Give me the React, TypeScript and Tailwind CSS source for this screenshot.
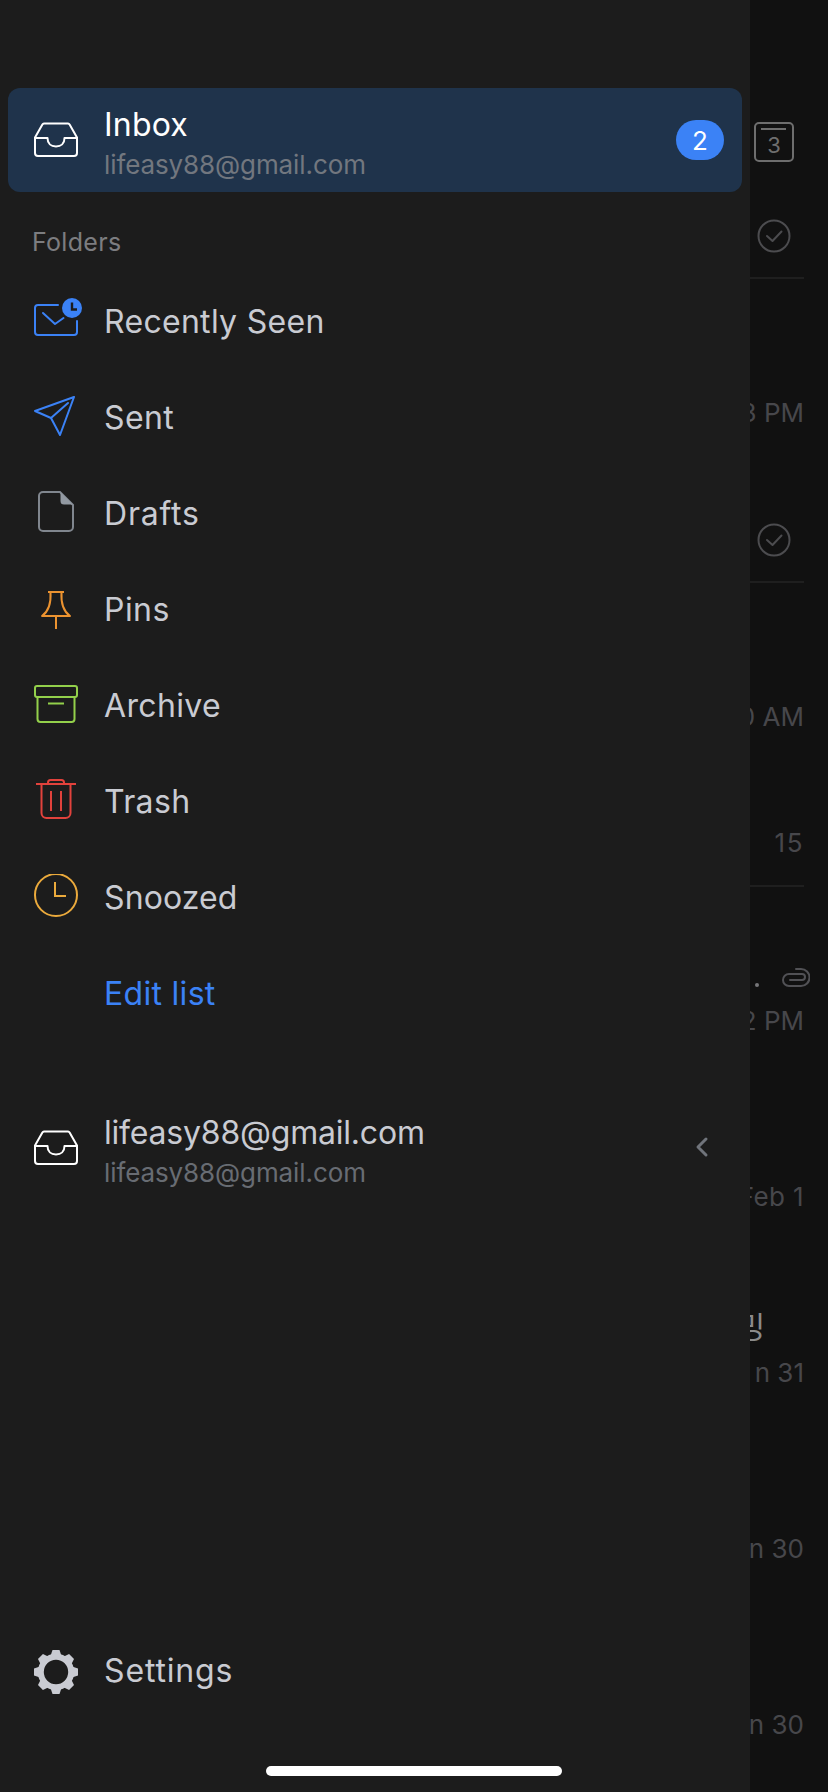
const font = { fontFamily: 'Inter, "Noto Sans CJK KR", sans-serif' };

function InboxIcon() {
  return (
    <svg width="44" height="44" viewBox="0 0 44 44" fill="none" stroke="#fff" strokeWidth="2" strokeLinejoin="round" strokeLinecap="round">
      <path d="M10 5.5H34A2 2 0 0 1 35.6 6.5L43 19.5V35A3 3 0 0 1 40 38H4A3 3 0 0 1 1 35V19.5L8.4 6.5A2 2 0 0 1 10 5.5Z" />
      <path d="M1 20H13.5C13.5 25.5 17 28.5 22 28.5S30.5 25.5 30.5 20H43" />
    </svg>
  );
}

function RecentIcon() {
  return (
    <svg width="44" height="44" viewBox="0 0 44 44" fill="none" stroke="#3b82f6" strokeWidth="2" strokeLinecap="round" strokeLinejoin="round" className="overflow-visible">
      <path d="M24 7H4A3 3 0 0 0 1 10V34A3 3 0 0 0 4 37H40A3 3 0 0 0 43 34V23" />
      <path d="M9 15L21 26L29.5 20" />
      <circle cx="38" cy="10" r="10" fill="#3b82f6" stroke="none" />
      <path d="M38 4.5V11.5H43" stroke="#1c1c1c" strokeWidth="2.4" strokeLinecap="butt" strokeLinejoin="miter" />
    </svg>
  );
}

function SentIcon() {
  return (
    <svg width="44" height="44" viewBox="0 0 44 44" fill="none" stroke="#3b82f6" strokeWidth="2" strokeLinejoin="round" strokeLinecap="round">
      <path d="M40 3L1 17L17 24L26 41Z" />
      <path d="M17 24L34 9" />
    </svg>
  );
}

function DraftIcon() {
  return (
    <svg width="44" height="44" viewBox="0 0 44 44" fill="none">
      <path d="M9 2H26L39 15V37A4 4 0 0 1 35 41H9A4 4 0 0 1 5 37V6A4 4 0 0 1 9 2Z" stroke="#80868e" strokeWidth="2" />
      <path d="M26.5 2L39 14.5H30A3.5 3.5 0 0 1 26.5 11Z" fill="#9299a2" />
    </svg>
  );
}

function PinIcon() {
  return (
    <svg width="44" height="44" viewBox="0 0 44 44" fill="none" stroke="#ec9330" strokeWidth="2" strokeLinejoin="round">
      <path d="M14 6H30" />
      <path d="M16.5 6C17 14 16.5 24 8 30H36C27.5 24 27 14 27.5 6" />
      <path d="M22 30V43" />
    </svg>
  );
}

function ArchiveIcon() {
  return (
    <svg width="44" height="44" viewBox="0 0 44 44" fill="none" stroke="#93d04b" strokeWidth="2" strokeLinejoin="round">
      <rect x="1" y="4" width="42" height="11" rx="2" />
      <path d="M3.5 15V37A3 3 0 0 0 6.5 40H37.5A3 3 0 0 0 40.5 37V15" />
      <path d="M14 21.5H30" />
    </svg>
  );
}

function TrashIcon() {
  return (
    <svg width="44" height="44" viewBox="0 0 44 44" fill="none" stroke="#e2423c" strokeWidth="2">
      <path d="M2 6H42" />
      <path d="M14 6V4.5A2.5 2.5 0 0 1 16.5 2H27.5A2.5 2.5 0 0 1 30 4.5V6" />
      <path d="M7.5 6V35A5 5 0 0 0 12.5 40H31.5A5 5 0 0 0 36.5 35V6" />
      <path d="M17 13V33M27 13V33" />
    </svg>
  );
}

function ClockIcon() {
  return (
    <svg width="44" height="44" viewBox="0 0 44 44" fill="none" stroke="#ebaa3c" strokeWidth="2">
      <circle cx="22" cy="21" r="21" />
      <path d="M21 8V22H32" />
    </svg>
  );
}

function GearIcon() {
  const angles = [0, 45, 90, 135, 180, 225, 270, 315];
  return (
    <svg width="44" height="44" viewBox="0 0 44 44" fill="none">
      <circle cx="22" cy="22" r="15.2" stroke="#c9cbd2" strokeWidth="6" />
      {angles.map((a) => (
        <path key={a} d="M18.5 0H25.5L27.5 6H16.5Z" fill="#c9cbd2" transform={`rotate(${a} 22 22)`} />
      ))}
    </svg>
  );
}

function CheckCircle() {
  return (
    <svg width="34" height="34" viewBox="0 0 34 34" fill="none" stroke="#4c4c4f" strokeWidth="2">
      <circle cx="17" cy="17" r="15.5" />
      <path d="M10 17L15.5 22L24.5 12.5" strokeLinecap="round" strokeLinejoin="round" />
    </svg>
  );
}

function Clip() {
  return (
    <svg width="29" height="22" viewBox="0 0 29 22" fill="none" stroke="#515155" strokeWidth="2" strokeLinecap="round" strokeLinejoin="round">
      <path d="M9 13H21A3 3 0 0 0 21 7H8A6 6 0 0 0 8 19H20A8.5 8.5 0 0 0 20 2H15" />
    </svg>
  );
}

function Row({ icon, label, textClass }: { icon: React.ReactNode; label: string; textClass: string }) {
  return (
    <div className="flex h-[96px] items-center pl-[34px]">
      <div className="h-[44px] w-[44px] shrink-0">{icon}</div>
      <span className={`ml-[26px] text-[32px] font-[420] leading-[40px] text-[#c9cbd2] ${textClass}`}>{label}</span>
    </div>
  );
}

function Time({ children }: { children: React.ReactNode }) {
  return <div className="text-[26px] leading-[32px] text-[#47474b]">{children}</div>;
}

export default function App() {
  return (
    <div className="relative h-[1792px] w-[828px] overflow-hidden bg-[#111111]" style={font}>
      {/* message list behind the drawer */}
      <div className="flex flex-col items-stretch">
        <div className="mr-6 flex h-[279px] flex-col items-end border-b-2 border-[#1f1f1f] pt-[122px]">
          <div className="relative mr-[10px] h-[40px] w-[40px] rounded-[5px] border-[2.5px] border-[#6e6e6e]">
            <div className="absolute left-[5px] top-[4px] h-[2px] w-[25px] bg-[#6e6e6e]" />
            <div className="mt-[8px] text-center text-[22px] leading-[26px] text-[#6e6e6e]">3</div>
          </div>
          <div className="mr-[13px] mt-[57px]"><CheckCircle /></div>
        </div>
        <div className="mr-6 flex h-[304px] flex-col items-end border-b-2 border-[#1f1f1f] pt-[118px]">
          <Time>3 PM</Time>
          <div className="mr-[13px] mt-[94px]"><CheckCircle /></div>
        </div>
        <div className="mr-6 flex h-[304px] flex-col items-end border-b-2 border-[#1f1f1f] pt-[118px]">
          <Time>0 AM</Time>
          <div className="mt-[94px] tracking-[1.5px]"><Time>15</Time></div>
        </div>
        <div className="mr-6 flex h-[176px] flex-col items-end pt-[80px]">
          <div className="mr-[-6px] flex items-end gap-[22px]">
            <div className="mb-[2px] h-[4px] w-[4px] rounded-full bg-[#77777a]" />
            <Clip />
          </div>
          <div className="mt-[16px]"><Time>2 PM</Time></div>
        </div>
        <div className="mr-6 flex h-[176px] flex-col items-end pt-[118px] tracking-[0.4px]">
          <Time>Feb 1</Time>
        </div>
        <div className="mr-6 flex h-[176px] flex-col items-end pt-[70px]">
          <div className="mr-[39px] h-[36px] text-[30px] leading-[36px] text-[#8a8a8a]">밍</div>
          <div className="mt-[12px]"><Time>n 31</Time></div>
        </div>
        <div className="mr-6 flex h-[176px] flex-col items-end pt-[118px]">
          <Time>n 30</Time>
        </div>
        <div className="mr-6 flex h-[176px] flex-col items-end pt-[118px]">
          <Time>n 30</Time>
        </div>
      </div>

      {/* drawer */}
      <div className="absolute inset-y-0 left-0 flex w-[750px] flex-col bg-[#1c1c1c] pt-[88px]">
        <div className="mx-[8px] flex h-[104px] items-center rounded-[12px] bg-[#1f334b] pl-[26px] pr-[18px]">
          <InboxIcon />
          <div className="ml-[26px] flex-1 pt-[9px]">
            <div className="text-[32px] font-[420] leading-[40px] tracking-[0.2px] text-white">Inbox</div>
            <div className="text-[26px] leading-[40px] tracking-[-0.1px] text-[#72777f]">lifeasy88@gmail.com</div>
          </div>
          <div className="flex h-[40px] w-[48px] items-center justify-center rounded-full bg-[#3b82f6] text-[26px] text-white">2</div>
        </div>

        <div className="mt-[32px] pl-[32px] text-[25px] leading-[36px] tracking-[0.3px] text-[#7c7d80]">Folders</div>

        <div className="mt-[12px]">
          <Row icon={<RecentIcon />} label="Recently Seen" textClass="pt-[3px] tracking-[0.3px]" />
          <Row icon={<SentIcon />} label="Sent" textClass="pt-[3px] tracking-[0.4px]" />
          <Row icon={<DraftIcon />} label="Drafts" textClass="pt-[3px] tracking-[0.8px]" />
          <Row icon={<PinIcon />} label="Pins" textClass="pt-[3px] tracking-[0.45px]" />
          <Row icon={<ArchiveIcon />} label="Archive" textClass="pt-[3px] tracking-[0.35px]" />
          <Row icon={<TrashIcon />} label="Trash" textClass="pt-[3px] tracking-[0.35px]" />
          <Row icon={<ClockIcon />} label="Snoozed" textClass="pt-[3px] tracking-[0.1px]" />
          <div className="flex h-[96px] items-center pl-[104px] pt-[3px] text-[32px] tracking-[0.3px] text-[#3b82f6]">Edit list</div>
        </div>

        <div className="mt-[58px] flex h-[100px] items-center pl-[34px] pr-[41px]">
          <InboxIcon />
          <div className="ml-[26px] flex-1 pt-[10px]">
            <div className="text-[32px] font-[420] leading-[40px] tracking-[-0.2px] text-[#c9cbd2]">lifeasy88@gmail.com</div>
            <div className="text-[26px] leading-[40px] tracking-[-0.1px] text-[#686c73]">lifeasy88@gmail.com</div>
          </div>
          <svg width="14" height="22" viewBox="0 0 14 22" fill="none" stroke="#70747b" strokeWidth="3" strokeLinecap="round" strokeLinejoin="round" className="mb-[2px]">
            <path d="M11 3L3 11L11 19" />
          </svg>
        </div>

        <div className="mt-auto mb-[72px]">
          <Row icon={<GearIcon />} label="Settings" textClass="pb-[3px] tracking-[0.85px]" />
        </div>
      </div>

      <div className="absolute bottom-[16px] left-[266px] h-[10px] w-[296px] rounded-full bg-white" />
    </div>
  );
}
